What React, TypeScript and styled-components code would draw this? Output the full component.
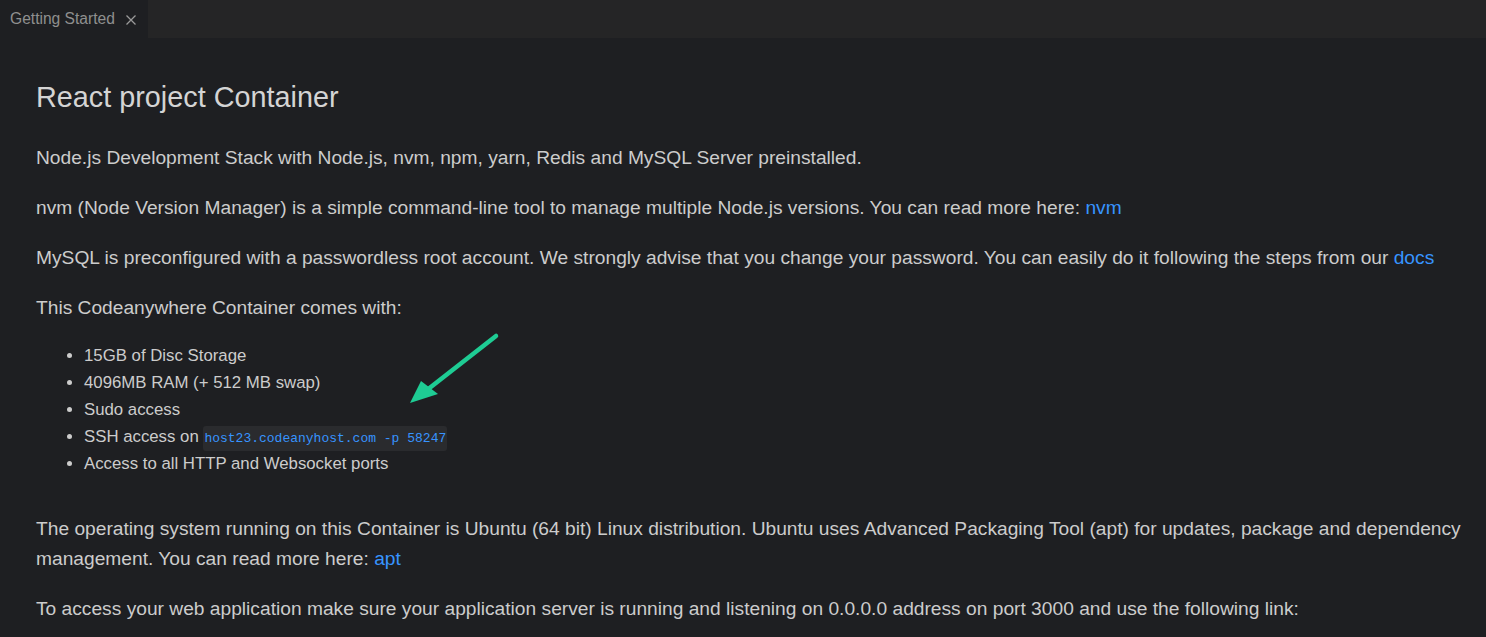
import React from "react";
import styled, { createGlobalStyle } from "styled-components";

const Global = createGlobalStyle`
  html, body { margin: 0; padding: 0; background: #1e1f22; }
  body { font-family: "Liberation Sans", Arial, sans-serif; overflow: hidden; }
`;

const Page = styled.div`
  width: 1486px;
  height: 637px;
  background: #1e1f22;
  display: flex;
  flex-direction: column;
  overflow: hidden;
`;

const TabBar = styled.div`
  height: 38px;
  background: #252526;
  display: flex;
  flex-shrink: 0;
`;

const Tab = styled.div`
  width: 148px;
  background: #1e1f22;
  display: flex;
  align-items: center;
  gap: 10px;
  padding-left: 10px;
  box-sizing: border-box;
  color: #8f8f8f;
  font-size: 15.6px;
`;

const Close = styled.span`
  display: inline-flex;
  align-items: center;
  justify-content: center;
  width: 12px;
  height: 12px;
  margin-top: 1px;
`;

const Content = styled.div`
  position: relative;
  padding: 42px 20px 0 36px;
  color: #cccccc;
`;

const Title = styled.h1`
  margin: 0 0 29px 0;
  font-size: 28.8px;
  font-weight: 400;
  line-height: 34px;
  color: #d4d4d4;
`;

const Para = styled.p<{ $gap?: number }>`
  margin: 0 0 ${(p) => p.$gap ?? 20}px 0;
  font-size: 19.2px;
  line-height: 30px;
`;

const Link = styled.a`
  color: #3794ff;
  text-decoration: none;
`;

const List = styled.ul`
  margin: 0 0 37px 0;
  padding-left: 48px;
  font-size: 16.8px;
  line-height: 27px;
`;

const Code = styled.code`
  font-family: "Liberation Mono", "DejaVu Sans Mono", monospace;
  font-size: 13px;
  line-height: 1;
  color: #3794ff;
  background: #2a2b2e;
  padding: 5px 1px;
  border-radius: 3px;
`;

const Arrow = styled.svg`
  position: absolute;
  left: 405px;
  top: 292px;
`;

export default function App() {
  return (
    <Page>
      <Global />
      <TabBar>
        <Tab>
          Getting Started
          <Close>
            <svg width="12" height="12" viewBox="0 0 12 12">
              <path d="M1.5 1.5 L10.5 10.5 M10.5 1.5 L1.5 10.5" stroke="#9a9a9a" strokeWidth="1.3" />
            </svg>
          </Close>
        </Tab>
      </TabBar>
      <Content>
        <Title>React project Container</Title>
        <Para>Node.js Development Stack with Node.js, nvm, npm, yarn, Redis and MySQL Server preinstalled.</Para>
        <Para>
          nvm (Node Version Manager) is a simple command-line tool to manage multiple Node.js versions. You can read more here: <Link>nvm</Link>
        </Para>
        <Para>
          MySQL is preconfigured with a passwordless root account. We strongly advise that you change your password. You can easily do it following the steps from our <Link>docs</Link>
        </Para>
        <Para $gap={19}>This Codeanywhere Container comes with:</Para>
        <List>
          <li>15GB of Disc Storage</li>
          <li>4096MB RAM (+ 512 MB swap)</li>
          <li>Sudo access</li>
          <li>
            SSH access on <Code>host23.codeanyhost.com -p 58247</Code>
          </li>
          <li>Access to all HTTP and Websocket ports</li>
        </List>
        <Para>
          The operating system running on this Container is Ubuntu (64 bit) Linux distribution. Ubuntu uses Advanced Packaging Tool (apt) for updates, package and dependency management. You can read more here: <Link>apt</Link>
        </Para>
        <Para>
          To access your web application make sure your application server is running and listening on 0.0.0.0 address on port 3000 and use the following link:
        </Para>
        <Arrow width="100" height="80" viewBox="0 0 100 80">
          <path d="M91 6 L22 60" stroke="#1ecc94" strokeWidth="4.5" strokeLinecap="round" fill="none" />
          <path d="M5 73 L16 51 L33 64 Z" fill="#1ecc94" />
        </Arrow>
      </Content>
    </Page>
  );
}
